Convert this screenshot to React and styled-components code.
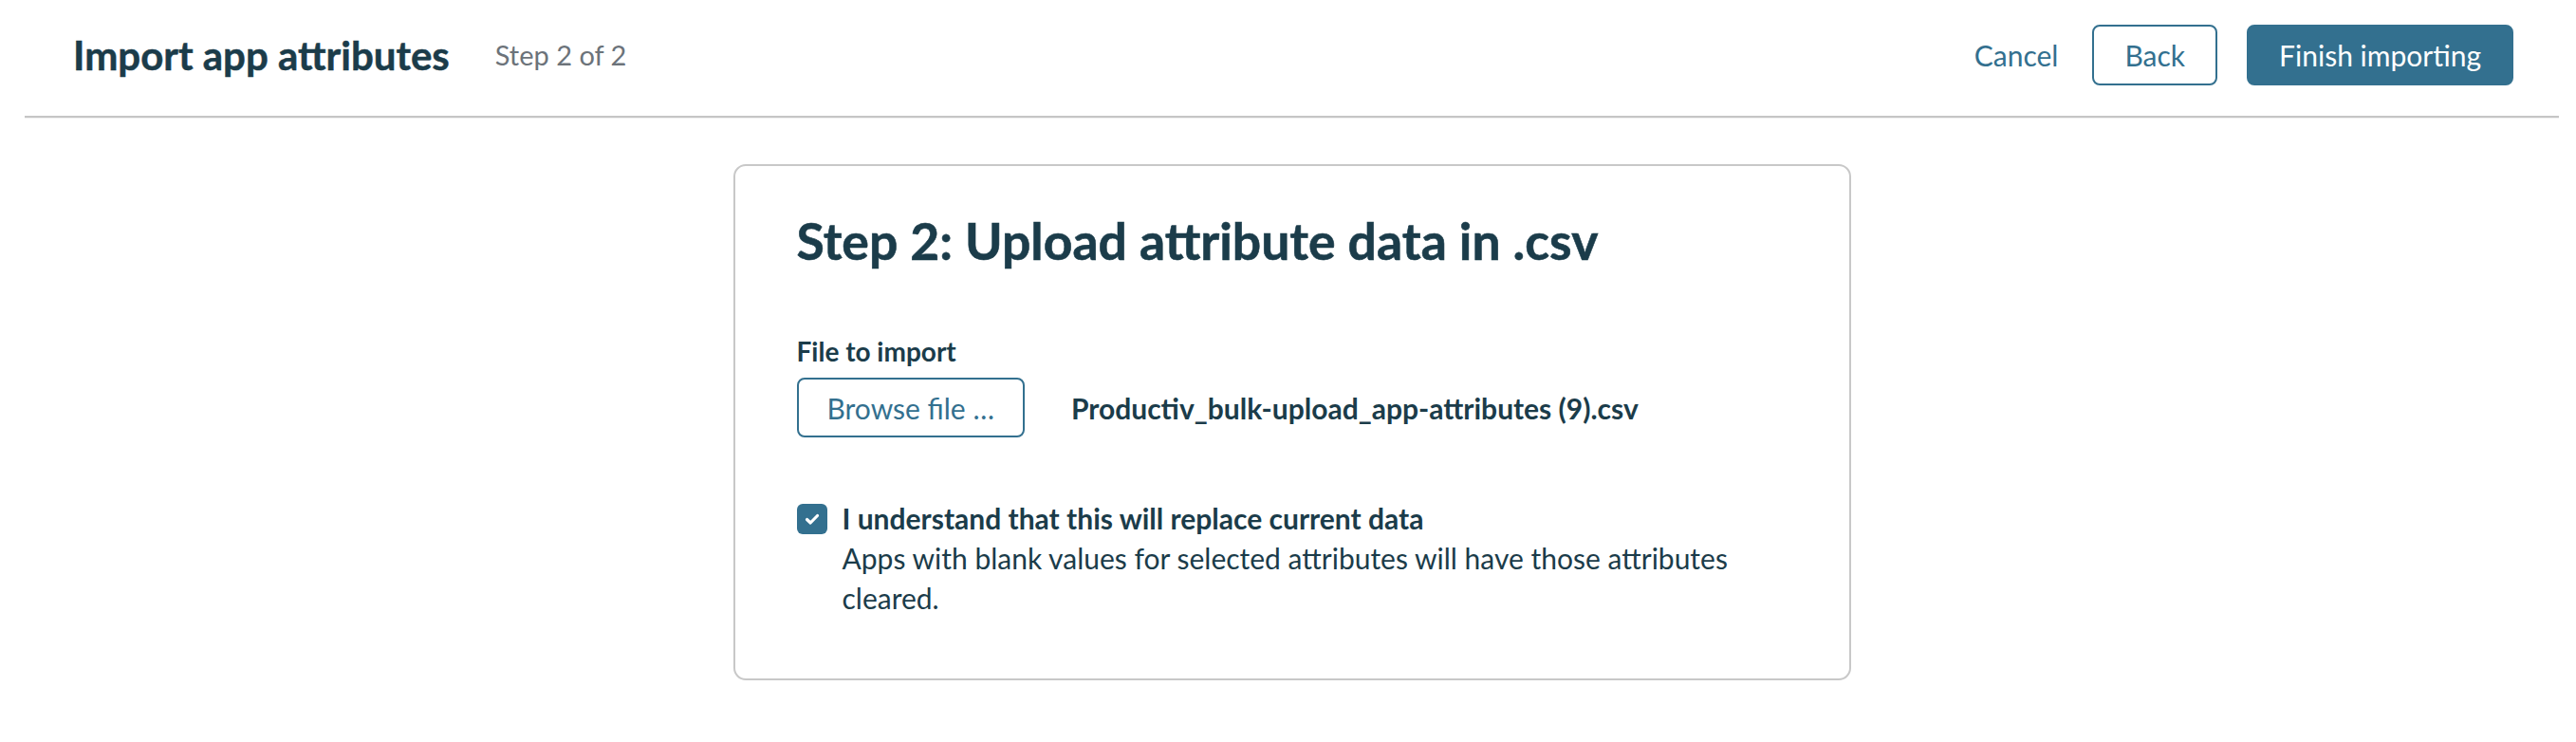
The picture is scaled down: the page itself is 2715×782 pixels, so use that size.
import React from "react"
import styled, { createGlobalStyle } from "styled-components"

const GlobalStyle = createGlobalStyle`
  html, body {
    margin: 0;
    padding: 0;
    background: #fff;
  }
  body {
    font-family: Lato, "Open Sans", "Liberation Sans", sans-serif;
    color: #1b3c4a;
  }
  * {
    box-sizing: border-box;
  }
`;

const Page = styled.div`
  padding: 0 18px 0 26px;
`;

const Header = styled.header`
  display: flex;
  flex-direction: row;
  align-items: center;
  justify-content: space-between;
  padding: 26px 48px 32px 51px;
  border-bottom: 2px solid #c5c5c5;
  box-shadow: 0 1px 0 #f0f0f0;
`;

const TitleGroup = styled.div`
  display: flex;
  align-items: center;
  gap: 48px;
`;

const Title = styled.h1`
  margin: 0;
  font-size: 42px;
  line-height: 48px;
  font-weight: 700;
  color: #1b3c4a;
  -webkit-text-stroke: 0.5px #1b3c4a;
`;

const StepCount = styled.span`
  font-size: 29px;
  line-height: 34px;
  color: #6c737a;
`;

const Actions = styled.div`
  display: flex;
  align-items: center;
`;

const Button = styled.button`
  font-family: inherit;
  font-size: 30px;
  line-height: 36px;
  height: ${p => p.$h || 64}px;
  padding: 0 ${p => p.$pad || 32}px;
  border-radius: 8px;
  cursor: pointer;
  display: inline-flex;
  align-items: center;
  justify-content: center;
  border: 2px solid #33708f;
  background: ${p => (p.$primary ? "#33708f" : "#fff")};
  color: ${p => (p.$primary ? "#fff" : "#33708f")};
  margin-left: ${p => p.$gap || 0}px;
`;

const LinkButton = styled.button`
  font-family: inherit;
  font-size: 30px;
  line-height: 36px;
  background: none;
  border: none;
  padding: 0;
  color: #33708f;
  cursor: pointer;
`;

const Main = styled.main`
  display: flex;
  justify-content: center;
  padding-top: 49px;
`;

const Card = styled.section`
  width: 1178px;
  border: 2px solid #c8c8c8;
  border-radius: 13px;
  padding: 47px 65px 64px 65px;
`;

const Heading = styled.h2`
  margin: 0 0 69px 0;
  font-size: 53.5px;
  line-height: 62px;
  font-weight: 700;
  color: #1b3c4a;
  -webkit-text-stroke: 0.6px #1b3c4a;
`;

const FieldLabel = styled.div`
  font-size: 28px;
  line-height: 34px;
  font-weight: 700;
  margin-bottom: 11px;
`;

const FileRow = styled.div`
  display: flex;
  align-items: center;
  gap: 49px;
`;

const FileName = styled.span`
  font-size: 30px;
  line-height: 36px;
  font-weight: 700;
`;

const CheckRow = styled.label`
  display: flex;
  align-items: flex-start;
  gap: 16px;
  margin-top: 64px;
  cursor: pointer;
`;

const Box = styled.span`
  flex: 0 0 32px;
  width: 32px;
  height: 32px;
  margin-top: 6px;
  border-radius: 6px;
  background: #33708f;
  display: flex;
  align-items: center;
  justify-content: center;
`;

const CheckText = styled.div`
  font-size: 30px;
  line-height: 42px;
`;

const CheckTitle = styled.div`
  font-weight: 700;
`;

const Check = () => (
  <svg width="18" height="18" viewBox="0 0 18 18" fill="none">
    <path
      d="M3.5 9.5 L7.2 13 L14.5 5.5"
      stroke="#fff"
      strokeWidth="3.2"
      strokeLinecap="round"
      strokeLinejoin="round"
    />
  </svg>
);

export default function App() {
  return (
    <Page>
      <GlobalStyle />
      <Header>
        <TitleGroup>
          <Title>Import app attributes</Title>
          <StepCount>Step 2 of 2</StepCount>
        </TitleGroup>
        <Actions>
          <LinkButton>Cancel</LinkButton>
          <Button $gap={36}>Back</Button>
          <Button $primary $gap={31}>Finish importing</Button>
        </Actions>
      </Header>

      <Main>
        <Card>
          <Heading>Step 2: Upload attribute data in .csv</Heading>
          <FieldLabel>File to import</FieldLabel>
          <FileRow>
            <Button $h={63} $pad={30}>Browse file …</Button>
            <FileName>Productiv_bulk-upload_app-attributes (9).csv</FileName>
          </FileRow>
          <CheckRow>
            <Box>
              <Check />
            </Box>
            <CheckText>
              <CheckTitle>I understand that this will replace current data</CheckTitle>
              Apps with blank values for selected attributes will have those attributes cleared.
            </CheckText>
          </CheckRow>
        </Card>
      </Main>
    </Page>
  )
}
